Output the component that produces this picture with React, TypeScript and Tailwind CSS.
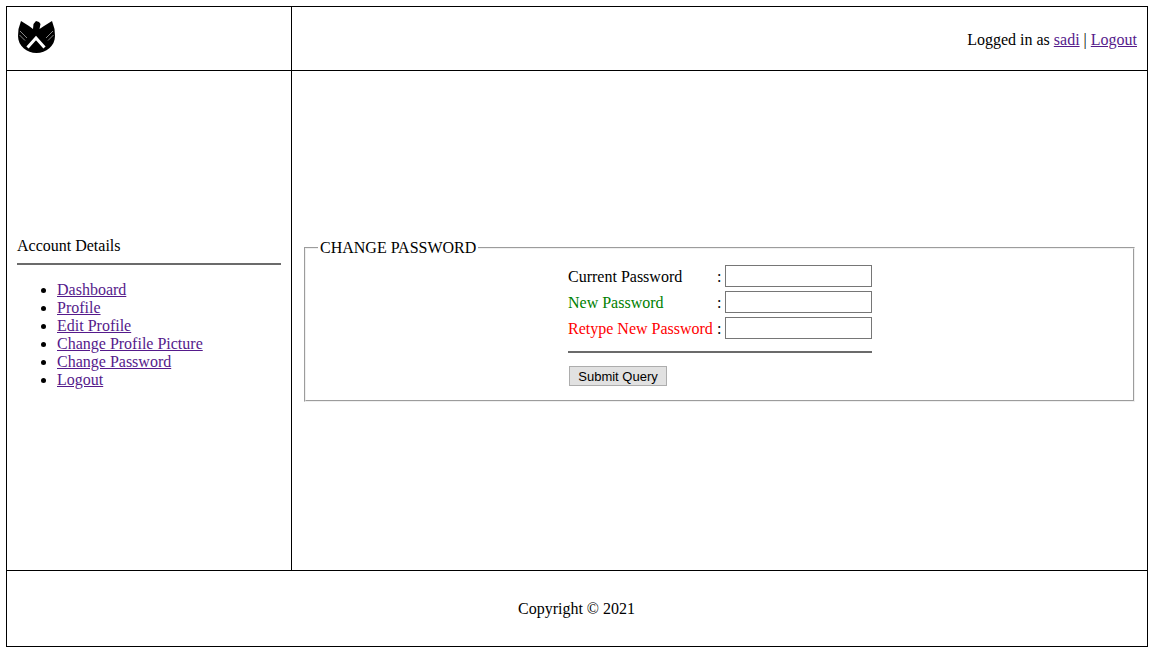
const links = ["Dashboard", "Profile", "Edit Profile", "Change Profile Picture", "Change Password", "Logout"];

const fields = [
  { label: "Current Password", color: "text-black" },
  { label: "New Password", color: "text-[#008000]" },
  { label: "Retype New Password", color: "text-[#ff0000]" },
];

function Logo() {
  return (
    <svg width="37" height="34" viewBox="0 0 37 34" className="block">
      {/* eagle shield */}
      <path
        d="M3 1 L11 6 L15 9 L15.500 4 L18 1 L21 2 L22.500 4 L21.500 9 L26 6 L34 1 L36.500 9 L37 16 C37 26 28 33 18.500 33 C9 33 0 26 0 16 L0.500 9 Z"
        fill="#000"
      />
      <path d="M9.500 27.500 L18 18 L26.500 27.500" stroke="#fff" strokeWidth="3" fill="none" />
      <path d="M2 11 L9 18 M1.500 15 L7 20.500 M35 11 L28 18 M35.500 15 L30 20.500" stroke="#888" strokeWidth="1" fill="none" />
    </svg>
  );
}

export default function App() {
  return (
    <div className="p-[6px] font-['Liberation_Serif',serif] text-[16px] leading-[18px] text-black bg-white">
      <div className="w-[1142px] h-[641px] border border-black flex flex-col">
        {/* Header */}
        <div className="flex h-[64px] border-b border-black">
          <div className="w-[285px] border-r border-black pl-[11px] pt-[13px]">
            <Logo />
          </div>
          <div className="flex-1 flex items-center justify-end pr-[10px] pt-[2px]">
            <span>
              Logged in as <a className="underline text-[#551a8b]">sadi</a> | <a className="underline text-[#551a8b]">Logout</a>
            </span>
          </div>
        </div>

        {/* Body */}
        <div className="flex h-[500px] border-b border-black">
          <div className="w-[285px] border-r border-black px-[10px] flex flex-col justify-center">
            <div className="mt-[-16px]">Account Details</div>
            <div className="mt-[8px] h-[2px] bg-[#6b6b6b]" />
            <ul className="mt-[16px] list-disc pl-[40px]">
              {links.map((l) => (
                <li key={l}>
                  <a className="underline text-[#551a8b]">{l}</a>
                </li>
              ))}
            </ul>
          </div>
          <div className="flex-1 flex items-center pl-[12px] pr-[12px]">
            <fieldset className="w-full h-[163px] border-2 [border-style:groove] border-[#f0f0f0] px-[12px]">
              <legend className="px-[2px]">CHANGE PASSWORD</legend>
              <div className="w-[304px] ml-[250px] mt-[8px]">
                <div className="flex flex-col gap-[4px]">
                  {fields.map((f) => (
                    <div key={f.label} className="flex items-center h-[22px]">
                      <span className={`w-[149px] pt-[2px] ${f.color}`}>{f.label}</span>
                      <span className="w-[8px] pt-[2px]">:</span>
                      <input type="password" className="w-[147px] h-[22px] border border-[#767676] bg-white" />
                    </div>
                  ))}
                </div>
                <div className="mt-[12px] h-[2px] bg-[#6b6b6b]" />
                <button className="mt-[13px] ml-[1px] w-[98px] h-[20px] border border-[#adadad] bg-[#e1e1e1] font-['Liberation_Sans',sans-serif] text-[13px] leading-[15px]">
                  Submit Query
                </button>
              </div>
            </fieldset>
          </div>
        </div>

        {/* Footer */}
        <div className="flex-1 flex items-center justify-center pr-[1px] pt-[1px]">Copyright © 2021</div>
      </div>
    </div>
  );
}
